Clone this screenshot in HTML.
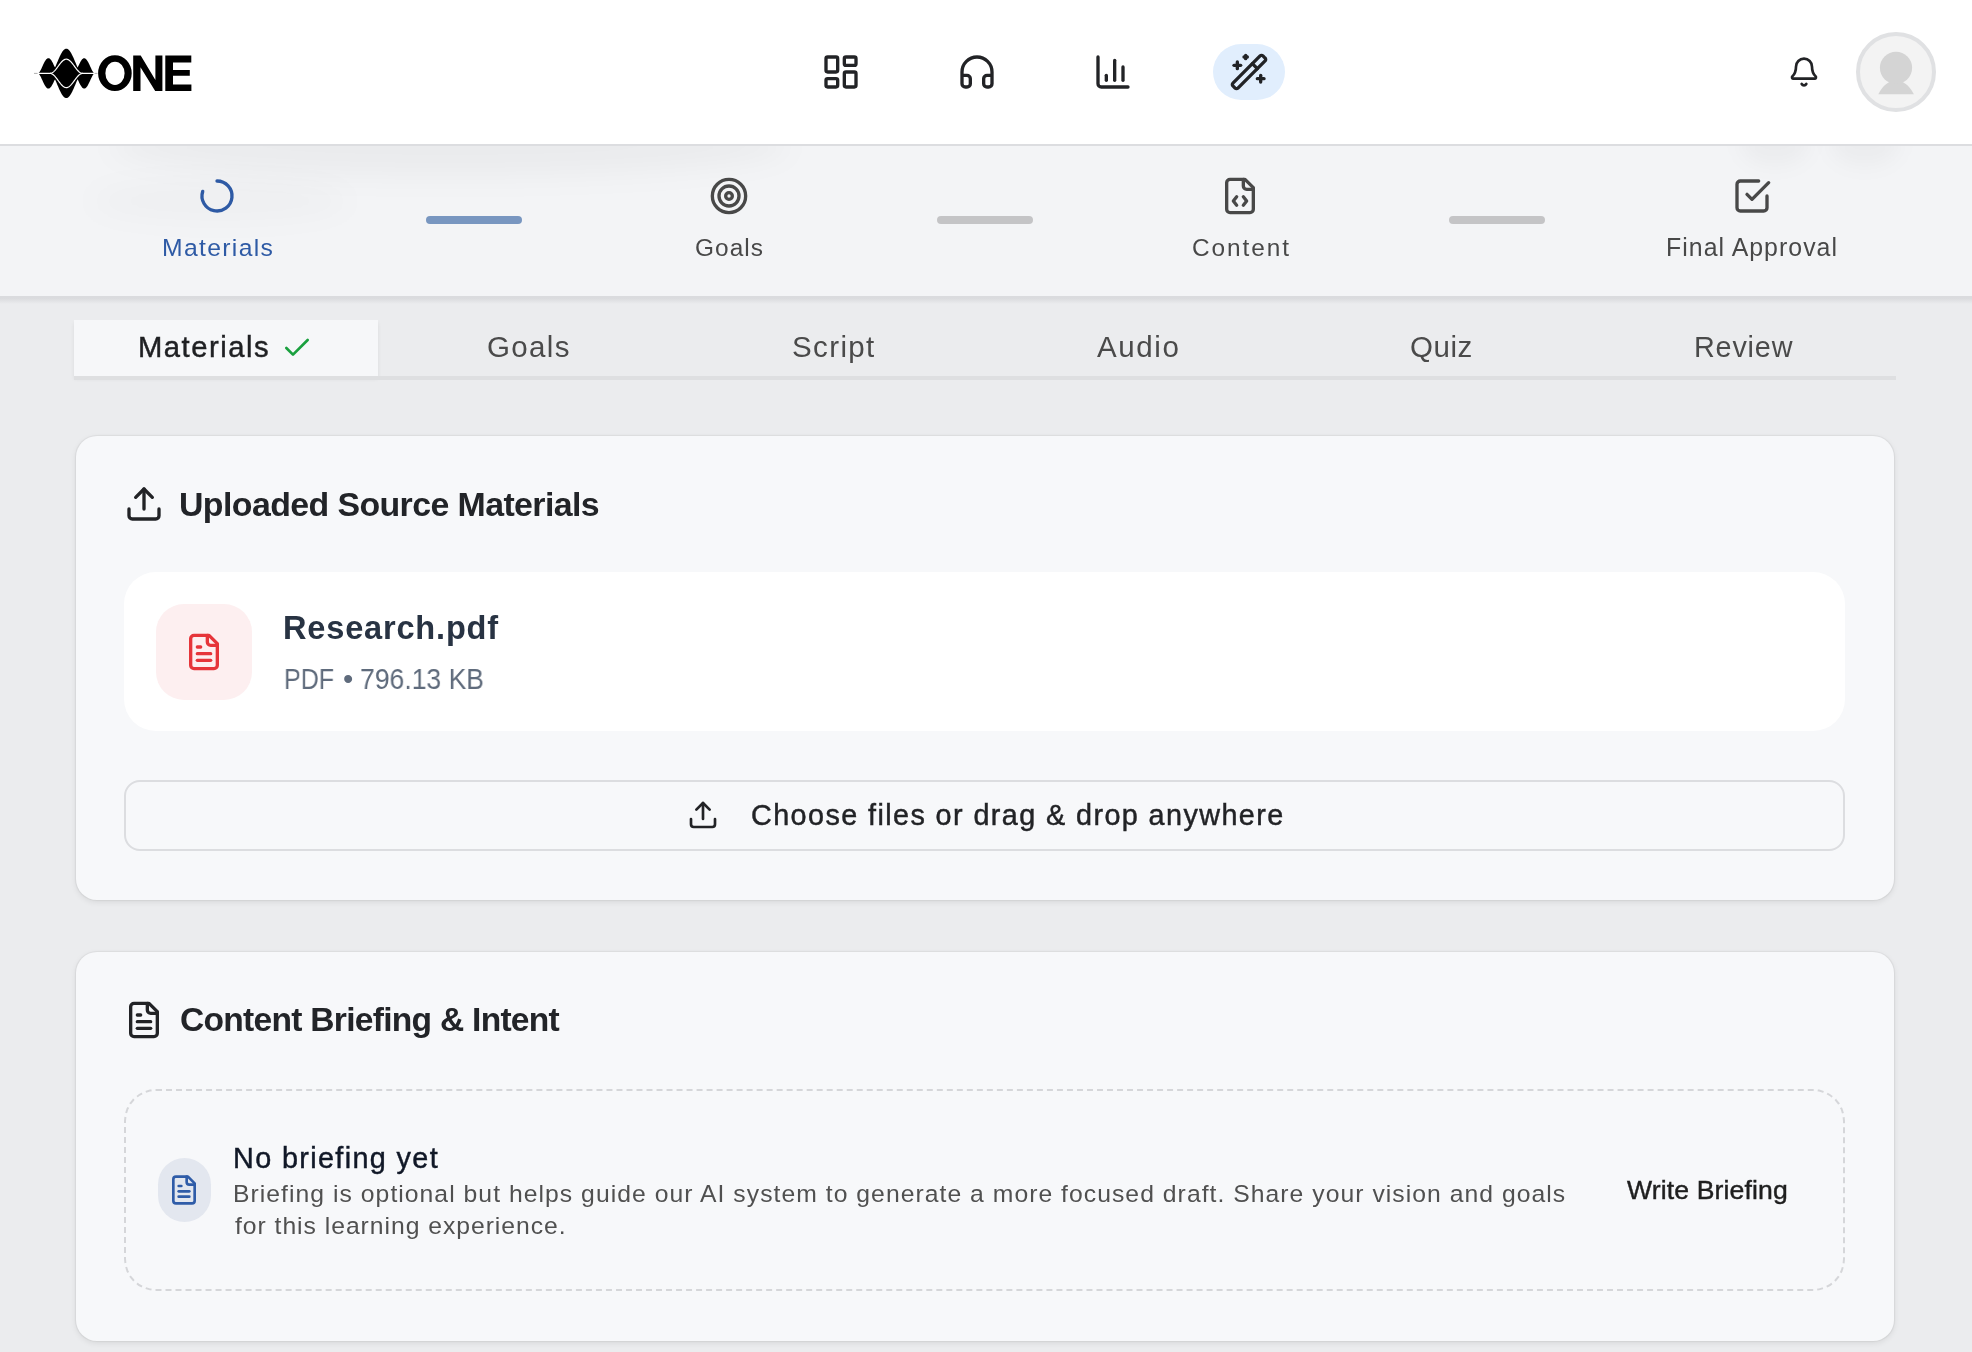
<!DOCTYPE html>
<html><head><meta charset="utf-8">
<style>
*{margin:0;padding:0;box-sizing:border-box}
html,body{width:1972px;height:1352px;overflow:hidden;background:#ebecee;font-family:"Liberation Sans",sans-serif;position:relative}
.abs{position:absolute}
.t{position:absolute;white-space:nowrap;line-height:1;will-change:transform}
svg{position:absolute;overflow:visible}
.ic{fill:none;stroke:#222326;stroke-width:2;stroke-linecap:round;stroke-linejoin:round}
.si{fill:none;stroke:#484848;stroke-width:2;stroke-linecap:round;stroke-linejoin:round}
.conn{position:absolute;top:216px;width:96px;height:8px;border-radius:4px;background:#c4c4c6}
.card{position:absolute;left:76px;width:1818px;background:#f7f8fa;border-radius:21px;box-shadow:0 0 1px 1px rgba(0,0,0,0.05),0 2px 6px rgba(0,0,0,0.085)}
</style></head><body>
<div class="abs" style="left:0;top:0;width:1972px;height:144px;background:#fff"></div>
<div class="abs" style="left:0;top:144px;width:1972px;height:2px;background:#dcdde0"></div>
<!-- logo -->
<svg style="left:0;top:0" width="200" height="110" viewBox="0 0 200 110">
  <path d="M37.6 73.40 L38.1 73.35 L38.6 73.08 L39.1 72.59 L39.6 71.93 L40.1 71.12 L40.6 70.20 L41.1 69.20 L41.6 68.14 L42.1 67.04 L42.6 65.94 L43.1 64.85 L43.6 63.79 L44.1 62.79 L44.6 61.86 L45.1 61.00 L45.6 60.25 L46.1 59.60 L46.6 59.06 L47.1 58.65 L47.6 58.37 L48.1 58.22 L48.6 58.21 L49.1 58.33 L49.6 58.59 L50.1 58.97 L50.6 59.48 L51.1 60.11 L51.6 60.84 L52.1 61.68 L52.6 62.60 L53.1 63.59 L53.6 64.64 L54.1 65.72 L54.6 66.82 L55.1 67.29 L55.6 66.16 L56.1 65.00 L56.6 63.81 L57.1 62.61 L57.6 61.41 L58.1 60.21 L58.6 59.04 L59.1 57.89 L59.6 56.78 L60.1 55.72 L60.6 54.71 L61.1 53.76 L61.6 52.88 L62.1 52.07 L62.6 51.33 L63.1 50.68 L63.6 50.12 L64.1 49.65 L64.6 49.27 L65.1 48.98 L65.6 48.80 L66.1 48.71 L66.6 48.72 L67.1 48.83 L67.6 49.03 L68.1 49.34 L68.6 49.74 L69.1 50.23 L69.6 50.81 L70.1 51.47 L70.6 52.22 L71.1 53.05 L71.6 53.95 L72.1 54.91 L72.6 55.93 L73.1 57.00 L73.6 58.12 L74.1 59.27 L74.6 60.45 L75.1 61.65 L75.6 62.85 L76.1 64.05 L76.6 65.23 L77.1 66.39 L77.6 67.51 L78.1 66.60 L78.6 65.50 L79.1 64.42 L79.6 63.39 L80.1 62.41 L80.6 61.50 L81.1 60.69 L81.6 59.97 L82.1 59.37 L82.6 58.88 L83.1 58.53 L83.6 58.30 L84.1 58.20 L84.6 58.24 L85.1 58.42 L85.6 58.73 L86.1 59.16 L86.6 59.72 L87.1 60.39 L87.6 61.17 L88.1 62.04 L88.6 62.99 L89.1 64.00 L89.6 65.07 L90.1 66.16 L90.6 67.26 L91.1 68.35 L91.6 69.41 L92.1 70.40 L92.6 71.30 L93.1 72.08 L93.6 72.71 L94.1 73.15 L94.6 73.38 L94.6 73.42 L94.1 73.65 L93.6 74.09 L93.1 74.72 L92.6 75.50 L92.1 76.40 L91.6 77.39 L91.1 78.45 L90.6 79.54 L90.1 80.64 L89.6 81.73 L89.1 82.80 L88.6 83.81 L88.1 84.76 L87.6 85.63 L87.1 86.41 L86.6 87.08 L86.1 87.64 L85.6 88.07 L85.1 88.38 L84.6 88.56 L84.1 88.60 L83.6 88.50 L83.1 88.27 L82.6 87.92 L82.1 87.43 L81.6 86.83 L81.1 86.11 L80.6 85.30 L80.1 84.39 L79.6 83.41 L79.1 82.38 L78.6 81.30 L78.1 80.20 L77.6 79.29 L77.1 80.41 L76.6 81.57 L76.1 82.75 L75.6 83.95 L75.1 85.15 L74.6 86.35 L74.1 87.53 L73.6 88.68 L73.1 89.80 L72.6 90.87 L72.1 91.89 L71.6 92.85 L71.1 93.75 L70.6 94.58 L70.1 95.33 L69.6 95.99 L69.1 96.57 L68.6 97.06 L68.1 97.46 L67.6 97.77 L67.1 97.97 L66.6 98.08 L66.1 98.09 L65.6 98.00 L65.1 97.82 L64.6 97.53 L64.1 97.15 L63.6 96.68 L63.1 96.12 L62.6 95.47 L62.1 94.73 L61.6 93.92 L61.1 93.04 L60.6 92.09 L60.1 91.08 L59.6 90.02 L59.1 88.91 L58.6 87.76 L58.1 86.59 L57.6 85.39 L57.1 84.19 L56.6 82.99 L56.1 81.80 L55.6 80.64 L55.1 79.51 L54.6 79.98 L54.1 81.08 L53.6 82.16 L53.1 83.21 L52.6 84.20 L52.1 85.12 L51.6 85.96 L51.1 86.69 L50.6 87.32 L50.1 87.83 L49.6 88.21 L49.1 88.47 L48.6 88.59 L48.1 88.58 L47.6 88.43 L47.1 88.15 L46.6 87.74 L46.1 87.20 L45.6 86.55 L45.1 85.80 L44.6 84.94 L44.1 84.01 L43.6 83.01 L43.1 81.95 L42.6 80.86 L42.1 79.76 L41.6 78.66 L41.1 77.60 L40.6 76.60 L40.1 75.68 L39.6 74.87 L39.1 74.21 L38.6 73.72 L38.1 73.45 L37.6 73.40Z" fill="#000"/>
  <path d="M50.0 73.40 L50.5 73.37 L51.0 73.27 L51.5 73.11 L52.0 72.88 L52.5 72.59 L53.0 72.25 L53.5 71.84 L54.0 71.39 L54.5 70.89 L55.0 70.35 L55.5 69.77 L56.0 69.16 L56.5 68.52 L57.0 67.86 L57.5 67.19 L58.0 66.51 L58.5 65.82 L59.0 65.14 L59.5 64.47 L60.0 63.82 L60.5 63.19 L61.0 62.59 L61.5 62.03 L62.0 61.50 L62.5 61.02 L63.0 60.59 L63.5 60.21 L64.0 59.89 L64.5 59.62 L65.0 59.42 L65.5 59.28 L66.0 59.21 L66.5 59.21 L67.0 59.26 L67.5 59.39 L68.0 59.58 L68.5 59.83 L69.0 60.14 L69.5 60.51 L70.0 60.93 L70.5 61.40 L71.0 61.92 L71.5 62.48 L72.0 63.07 L72.5 63.69 L73.0 64.34 L73.5 65.01 L74.0 65.68 L74.5 66.37 L75.0 67.05 L75.5 67.73 L76.0 68.39 L76.5 69.03 L77.0 69.65 L77.5 70.24 L78.0 70.79 L78.5 71.30 L79.0 71.76 L79.5 72.17 L80.0 72.53 L80.5 72.83 L81.0 73.07 L81.5 73.24 L82.0 73.35 L82.5 73.40" fill="none" stroke="#fff" stroke-width="1.2"/>
  <path d="M50.0 73.40 L50.5 73.43 L51.0 73.53 L51.5 73.69 L52.0 73.92 L52.5 74.21 L53.0 74.55 L53.5 74.96 L54.0 75.41 L54.5 75.91 L55.0 76.45 L55.5 77.03 L56.0 77.64 L56.5 78.28 L57.0 78.94 L57.5 79.61 L58.0 80.29 L58.5 80.98 L59.0 81.66 L59.5 82.33 L60.0 82.98 L60.5 83.61 L61.0 84.21 L61.5 84.77 L62.0 85.30 L62.5 85.78 L63.0 86.21 L63.5 86.59 L64.0 86.91 L64.5 87.18 L65.0 87.38 L65.5 87.52 L66.0 87.59 L66.5 87.59 L67.0 87.54 L67.5 87.41 L68.0 87.22 L68.5 86.97 L69.0 86.66 L69.5 86.29 L70.0 85.87 L70.5 85.40 L71.0 84.88 L71.5 84.32 L72.0 83.73 L72.5 83.11 L73.0 82.46 L73.5 81.79 L74.0 81.12 L74.5 80.43 L75.0 79.75 L75.5 79.07 L76.0 78.41 L76.5 77.77 L77.0 77.15 L77.5 76.56 L78.0 76.01 L78.5 75.50 L79.0 75.04 L79.5 74.63 L80.0 74.27 L80.5 73.97 L81.0 73.73 L81.5 73.56 L82.0 73.45 L82.5 73.40" fill="none" stroke="#fff" stroke-width="1.2"/>
  <path d="M36 73.4 H50.5 M81.8 73.4 H96" fill="none" stroke="#fff" stroke-width="1.2"/>
  <path d="M34 73.4 H37.6 M94.6 73.4 H97.5" fill="none" stroke="#999" stroke-width="0.8"/>
  <path fill="#000" fill-rule="evenodd" d="M98.1 73.15 A16.8 17.95 0 1 0 131.7 73.15 A16.8 17.95 0 1 0 98.1 73.15 Z M105.4 73.35 A9.6 11.65 0 1 1 124.6 73.35 A9.6 11.65 0 1 1 105.4 73.35 Z"/>
  <path fill="#000" d="M133.2 55.5 H140.7 L155.4 80 V55.5 H162.4 V90.9 H155.2 L140.5 67.2 V90.9 H133.2 Z"/>
  <path fill="#000" d="M165.3 55.5 H191.3 V62.6 H173 V70.1 H189.8 V75.7 H173 V84.5 H191.4 V90.9 H165.3 Z"/>
</svg>

<!-- nav icons -->
<div class="abs" style="left:1213px;top:44px;width:72px;height:56px;border-radius:28px;background:#e1eefd"></div>
<svg style="left:821px;top:52px" width="40" height="40" viewBox="0 0 24 24" class="ic">
  <rect x="3" y="3" width="7" height="9" rx="1"/><rect x="14" y="3" width="7" height="5" rx="1"/><rect x="14" y="12" width="7" height="9" rx="1"/><rect x="3" y="16" width="7" height="5" rx="1"/>
</svg>
<svg style="left:957px;top:52px" width="40" height="40" viewBox="0 0 24 24" class="ic">
  <path d="M3 14h3a2 2 0 0 1 2 2v3a2 2 0 0 1-2 2H5a2 2 0 0 1-2-2v-7a9 9 0 0 1 18 0v7a2 2 0 0 1-2 2h-1a2 2 0 0 1-2-2v-3a2 2 0 0 1 2-2h3"/>
</svg>
<svg style="left:1093px;top:52px" width="40" height="40" viewBox="0 0 24 24" class="ic">
  <path d="M3 3v16a2 2 0 0 0 2 2h16"/><path d="M18 17V9"/><path d="M13 17V5"/><path d="M8 17v-3"/>
</svg>
<svg style="left:1229px;top:52px" width="40" height="40" viewBox="0 0 24 24" class="ic">
  <path d="m21.64 3.64-1.28-1.28a1.21 1.21 0 0 0-1.72 0L2.36 18.64a1.21 1.21 0 0 0 0 1.72l1.28 1.28a1.2 1.2 0 0 0 1.72 0L21.64 5.36a1.2 1.2 0 0 0 0-1.72"/><path d="m14 7 3 3"/><path d="M5 6v4"/><path d="M19 14v4"/><path d="M10 2v2"/><path d="M7 8H3"/><path d="M21 16h-4"/><path d="M11 3H9"/>
</svg>
<!-- bell -->
<svg style="left:1788px;top:56px" width="32" height="32" viewBox="0 0 24 24" class="ic">
  <path d="M3.262 15.326A1 1 0 0 0 4 17h16a1 1 0 0 0 .74-1.673C19.41 13.956 18 12.499 18 8A6 6 0 0 0 6 8c0 4.499-1.411 5.956-2.738 7.326"/><path d="M10.268 21a2 2 0 0 0 3.464 0"/>
</svg>
<!-- avatar -->
<div class="abs" style="left:1856px;top:32px;width:80px;height:80px;border-radius:50%;background:#f3f3f3;border:4px solid #e0e1e3"></div>
<svg style="left:1856px;top:32px" width="80" height="80" viewBox="0 0 80 80">
  <path d="M22.3 62.2 C27 53 33 48.8 40 48.8 C47 48.8 53 53 57.9 62.2 Z" fill="#d4d4d4"/>
  <circle cx="40" cy="35.8" r="16.1" fill="#d4d4d4"/>
</svg>

<!-- stepper -->
<div class="abs" style="left:0;top:146px;width:1972px;height:150px;background:#f3f4f6;overflow:hidden">
<div class="abs" style="left:110px;top:-30px;width:680px;height:60px;border-radius:50%;background:rgba(0,0,0,0.035);filter:blur(14px)"></div>
<div class="abs" style="left:90px;top:35px;width:260px;height:40px;border-radius:50%;background:rgba(0,0,0,0.018);filter:blur(14px)"></div>
<div class="abs" style="left:1740px;top:-25px;width:70px;height:45px;border-radius:50%;background:rgba(0,0,0,0.03);filter:blur(10px)"></div>
<div class="abs" style="left:1830px;top:-25px;width:70px;height:45px;border-radius:50%;background:rgba(0,0,0,0.03);filter:blur(10px)"></div>
</div>
<div class="abs" style="left:0;top:296px;width:1972px;height:2px;background:#dadbde"></div>
<div class="abs" style="left:0;top:298px;width:1972px;height:6px;background:linear-gradient(#d9dadd,#ebecee)"></div>
<div class="conn" style="left:426px;background:#7896c0"></div>
<div class="conn" style="left:937px"></div>
<div class="conn" style="left:1449px"></div>
<svg style="left:197px;top:176px" width="40" height="40" viewBox="0 0 24 24" class="si" >
  <path d="M12 3a9 9 0 1 1-8.56 6.219" style="stroke:#2e5aa5"/>
</svg>
<svg style="left:709px;top:176px" width="40" height="40" viewBox="0 0 24 24" class="si">
  <circle cx="12" cy="12" r="10"/><circle cx="12" cy="12" r="6"/><circle cx="12" cy="12" r="2"/>
</svg>
<svg style="left:1220px;top:176px" width="40" height="40" viewBox="0 0 24 24" class="si">
  <path d="M10 12.5 8 15l2 2.5"/><path d="m14 12.5 2 2.5-2 2.5"/><path d="M14 2v4a2 2 0 0 0 2 2h4"/><path d="M15 2H6a2 2 0 0 0-2 2v16a2 2 0 0 0 2 2h12a2 2 0 0 0 2-2V7z"/>
</svg>
<svg style="left:1732px;top:176px" width="40" height="40" viewBox="0 0 24 24" class="si">
  <path d="m9 11 3 3L22 4"/><path d="M21 12v7a2 2 0 0 1-2 2H5a2 2 0 0 1-2-2V5a2 2 0 0 1 2-2h11"/>
</svg>

<!-- tabs -->
<div class="abs" style="left:74px;top:320px;width:304px;height:56px;background:#f6f7f9;box-shadow:0 3px 4px rgba(0,0,0,0.07)"></div>
<div class="abs" style="left:74px;top:376px;width:1822px;height:4px;background:#dedfe1"></div>
<svg style="left:281px;top:332px" width="32" height="32" viewBox="0 0 24 24" class="ic" >
  <path d="M20 6 9 17l-5-5" style="stroke:#1aa03f"/>
</svg>

<!-- card 1 -->
<div class="card" style="top:436px;height:464px"></div>
<svg style="left:124px;top:484px" width="40" height="40" viewBox="0 0 24 24" class="ic">
  <path d="M21 15v4a2 2 0 0 1-2 2H5a2 2 0 0 1-2-2v-4"/><path d="M17 8l-5-5-5 5"/><path d="M12 3v12"/>
</svg>
<div class="abs" style="left:124px;top:572px;width:1721px;height:159px;background:#fff;border-radius:32px"></div>
<div class="abs" style="left:156px;top:604px;width:96px;height:96px;background:#fdeff0;border-radius:28px"></div>
<svg style="left:184px;top:632px" width="40" height="40" viewBox="0 0 24 24" class="ic" >
  <g style="stroke:#e6353a"><path d="M15 2H6a2 2 0 0 0-2 2v16a2 2 0 0 0 2 2h12a2 2 0 0 0 2-2V7Z"/><path d="M14 2v4a2 2 0 0 0 2 2h4"/><path d="M10 9H8"/><path d="M16 13H8"/><path d="M16 17H8"/></g>
</svg>
<div class="abs" style="left:124px;top:780px;width:1721px;height:71px;border:2px solid #dcdde0;border-radius:16px"></div>
<svg style="left:687px;top:799px" width="32" height="32" viewBox="0 0 24 24" class="ic">
  <path d="M21 15v4a2 2 0 0 1-2 2H5a2 2 0 0 1-2-2v-4"/><path d="M17 8l-5-5-5 5"/><path d="M12 3v12"/>
</svg>

<!-- card 2 -->
<div class="card" style="top:952px;height:389px"></div>
<svg style="left:124px;top:1000px" width="40" height="40" viewBox="0 0 24 24" class="ic">
  <path d="M15 2H6a2 2 0 0 0-2 2v16a2 2 0 0 0 2 2h12a2 2 0 0 0 2-2V7Z"/><path d="M14 2v4a2 2 0 0 0 2 2h4"/><path d="M10 9H8"/><path d="M16 13H8"/><path d="M16 17H8"/>
</svg>
<div class="abs" style="left:124px;top:1089px;width:1721px;height:202px;border:2px dashed #d5d6d9;border-radius:32px"></div>
<div class="abs" style="left:158px;top:1158px;width:53px;height:64px;background:#e3e7ef;border-radius:27px"></div>
<svg style="left:168px;top:1174px" width="32" height="32" viewBox="0 0 24 24" class="ic">
  <g style="stroke:#2f5ca8"><path d="M15 2H6a2 2 0 0 0-2 2v16a2 2 0 0 0 2 2h12a2 2 0 0 0 2-2V7Z"/><path d="M14 2v4a2 2 0 0 0 2 2h4"/><path d="M10 9H8"/><path d="M16 13H8"/><path d="M16 17H8"/></g>
</svg>

<div class="t" id="st1" style="left:162.00px;top:236.21px;font-size:24.71px;letter-spacing:1.332px;font-weight:normal;color:#2e5aa5;">Materials</div>
<div class="t" id="st2" style="left:694.80px;top:236.00px;font-size:24.42px;letter-spacing:1.075px;font-weight:normal;color:#484848;">Goals</div>
<div class="t" id="st3" style="left:1192.40px;top:236.00px;font-size:24.42px;letter-spacing:1.917px;font-weight:normal;color:#484848;">Content</div>
<div class="t" id="st4" style="left:1666.00px;top:235.71px;font-size:24.85px;letter-spacing:1.044px;font-weight:normal;color:#484848;">Final Approval</div>
<div class="t" id="tb1" style="left:137.80px;top:333.30px;font-size:29.22px;letter-spacing:1.500px;font-weight:normal;color:#1f2023;-webkit-text-stroke:0.45px #1f2023;">Materials</div>
<div class="t" id="tb2" style="left:487.20px;top:332.41px;font-size:29.51px;letter-spacing:1.350px;font-weight:normal;color:#4a4a4a;">Goals</div>
<div class="t" id="tb3" style="left:791.60px;top:332.41px;font-size:29.51px;letter-spacing:1.380px;font-weight:normal;color:#4a4a4a;">Script</div>
<div class="t" id="tb4" style="left:1097.00px;top:332.41px;font-size:29.51px;letter-spacing:1.625px;font-weight:normal;color:#4a4a4a;">Audio</div>
<div class="t" id="tb5" style="left:1409.60px;top:332.41px;font-size:29.51px;letter-spacing:0.533px;font-weight:normal;color:#4a4a4a;">Quiz</div>
<div class="t" id="tb6" style="left:1694.40px;top:333.21px;font-size:28.78px;letter-spacing:0.820px;font-weight:normal;color:#4a4a4a;">Review</div>
<div class="t" id="h1" style="left:179.00px;top:487.61px;font-size:33.87px;letter-spacing:-0.583px;font-weight:bold;color:#222428;">Uploaded Source Materials</div>
<div class="t" id="h2" style="left:180.00px;top:1003.41px;font-size:33.58px;letter-spacing:-0.730px;font-weight:bold;color:#222428;">Content Briefing &amp; Intent</div>
<div class="t" id="fn" style="left:283.00px;top:612.30px;font-size:32.56px;letter-spacing:0.810px;font-weight:bold;color:#283343;">Research.pdf</div>
<div class="t" id="fm1" style="left:283.50px;top:664.31px;font-size:29.51px;letter-spacing:0.000px;font-weight:normal;color:#5f6b7c;transform:scaleX(0.8484);transform-origin:0 0;">PDF</div>
<div class="t" id="fm2" style="left:343.00px;top:664.31px;font-size:29.51px;letter-spacing:0.000px;font-weight:normal;color:#5f6b7c;">•</div>
<div class="t" id="fm3" style="left:360.30px;top:664.31px;font-size:29.51px;letter-spacing:0.000px;font-weight:normal;color:#5f6b7c;transform:scaleX(0.8999);transform-origin:0 0;">796.13 KB</div>
<div class="t" id="dz" style="left:750.60px;top:801.01px;font-size:28.78px;letter-spacing:1.409px;font-weight:normal;color:#222326;-webkit-text-stroke:0.45px #222326;">Choose files or drag &amp; drop anywhere</div>
<div class="t" id="nb" style="left:233.40px;top:1143.51px;font-size:28.78px;letter-spacing:1.376px;font-weight:normal;color:#111827;-webkit-text-stroke:0.45px #111827;">No briefing yet</div>
<div class="t" id="d1" style="left:233.40px;top:1182.31px;font-size:24.71px;letter-spacing:1.041px;font-weight:normal;color:#505050;">Briefing is optional but helps guide our AI system to generate a more focused draft. Share your vision and goals</div>
<div class="t" id="d2" style="left:235.40px;top:1214.00px;font-size:24.71px;letter-spacing:0.970px;font-weight:normal;color:#505050;">for this learning experience.</div>
<div class="t" id="wb" style="left:1627.40px;top:1176.71px;font-size:26.60px;letter-spacing:0.121px;font-weight:normal;color:#1f1f1f;-webkit-text-stroke:0.45px #1f1f1f;">Write Briefing</div>
</body></html>
